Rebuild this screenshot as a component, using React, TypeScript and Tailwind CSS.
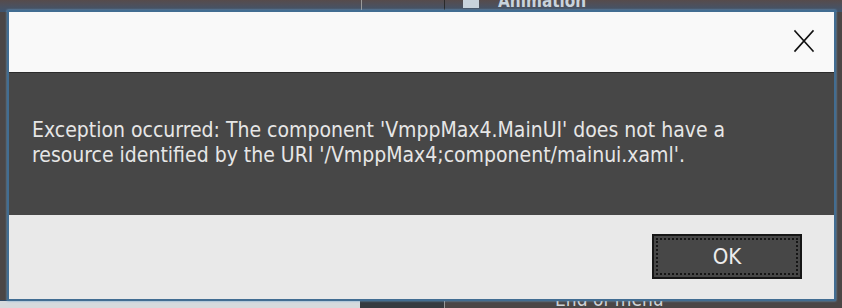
import React from 'react';

const uiFont = { fontFamily: '"DejaVu Sans Condensed", "DejaVu Sans", Tahoma, sans-serif' };

const CloseIcon: React.FC = () => (
  <svg width="22" height="24" viewBox="0 0 22 24" fill="none">
    <path d="M2 2 L20 22 M20 2 L2 22" stroke="#111" strokeWidth="1.6" strokeLinecap="square" />
  </svg>
);

export default function App() {
  return (
    <div className="relative w-[842px] h-[308px] overflow-hidden bg-[#4b4646] flex flex-col" style={uiFont}>
      {/* app behind the dialog */}
      <div className="h-[12px] flex bg-gradient-to-b from-[#564b4b] to-[#3e5570]">
        <div className="w-[362px] border-r border-[#9a9a9a]" />
        <div className="w-[83px] border-r border-[#2a2a2a]" />
        <div className="flex items-start gap-[19px] pl-[18px] -mt-[9px]">
          <div className="w-[16px] h-[17px] bg-[#c9d3dc]" />
          <span className="text-[17px] leading-[20px] font-bold text-[#c9d3dc]">Animation</span>
        </div>
      </div>
      <div className="flex-1" />
      <div className="h-[8px] flex">
        <div className="w-[360px] bg-[#d6dadd] border-t border-[#2f4a66]" />
        <div className="w-[85px] bg-[#363b40] border-r border-[#999]" />
        <div className="flex-1 pl-[110px] -mt-[12px] text-[19px] leading-[22px] text-[#d0d4d8]">End of menu</div>
      </div>

      {/* dialog window over the app */}
      <div className="absolute left-[7px] top-[10px] w-[829px] flex flex-col border-2 border-[#426d92] shadow-[0_0_2px_#6ea6d0]">
        <div className="h-[61px] bg-[#f9f9f9] border-b border-[#2c2c2c] flex items-start justify-end pt-[17px] pr-[19px]">
          <CloseIcon />
        </div>
        <div className="h-[142px] bg-[#474747] pt-[45px] pl-[23px] text-[21px] leading-[25px] text-[#e6e6e6]">
          <div>Exception occurred: The component 'VmppMax4.MainUI' does not have a</div>
          <div>resource identified by the URI '/VmppMax4;component/mainui.xaml'.</div>
        </div>
        <div className="h-[84px] bg-[#e9e9e9] flex justify-end items-start pt-[19px] pr-[32px]">
          <button className="w-[150px] h-[45px] border-2 border-[#161616] bg-[#474747] p-[2px]">
            <div className="w-full h-full border-2 border-dotted border-[#151515] flex items-center justify-center text-[22px] text-[#ececec]">
              OK
            </div>
          </button>
        </div>
      </div>
    </div>
  );
}
